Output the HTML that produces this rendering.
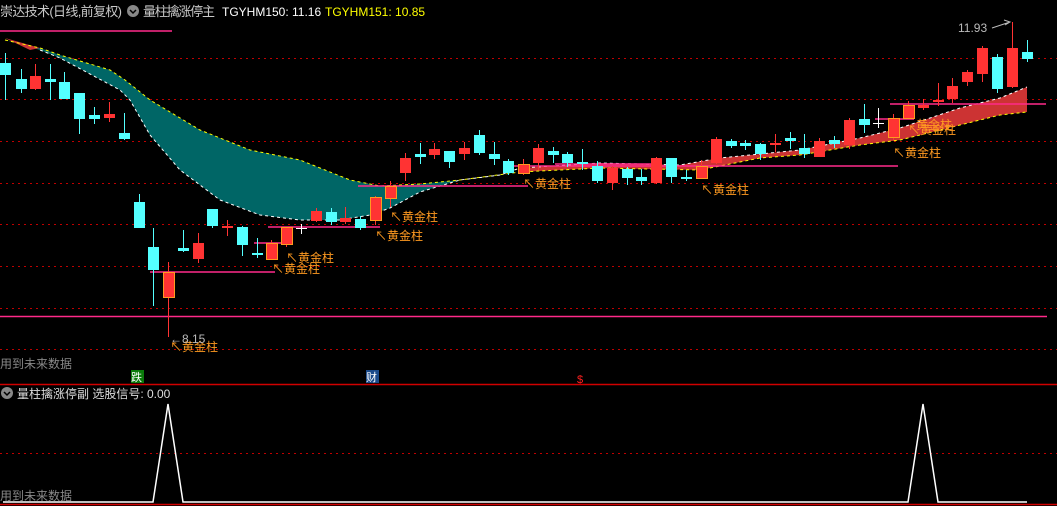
<!DOCTYPE html><html><head><meta charset="utf-8"><style>
body{margin:0;background:#000;width:1057px;height:506px;overflow:hidden}
svg{display:block}
text{font-family:"Liberation Sans","Noto Sans CJK SC",sans-serif}
</style></head><body>
<svg width="1057" height="506" viewBox="0 0 1057 506" xmlns="http://www.w3.org/2000/svg">
<g stroke="#c00000" stroke-dasharray="2,4" stroke-width="1">
<line x1="0" y1="58.5" x2="1057" y2="58.5"/><line x1="0" y1="99.5" x2="1057" y2="99.5"/><line x1="0" y1="141.5" x2="1057" y2="141.5"/><line x1="0" y1="183.5" x2="1057" y2="183.5"/><line x1="0" y1="224.5" x2="1057" y2="224.5"/><line x1="0" y1="266.5" x2="1057" y2="266.5"/><line x1="0" y1="308.5" x2="1057" y2="308.5"/><line x1="0" y1="349.5" x2="1057" y2="349.5"/><line x1="0" y1="453.5" x2="1057" y2="453.5"/>
</g>
<path d="M5,40 L40,48 L60,55 L110,70 L125,80 L150,100 L200,130 L250,150 L300,160 L350,180 L380,186 L420,184 L460,180 L520,172 L500,175 L460,180 L420,192 L390,208 L370,215 L340,220 L300,220 L260,215 L220,200 L180,170 L150,135 L130,100 L120,90 L60,58 L40,50 Z" fill="#006666"/>
<path d="M5,38 L40,48 L30,50 Z" fill="#cc3333"/>
<path d="M520,168 L600,163 L680,165 L720,158 L800,150 L860,138 L900,128 L960,108 L1000,98 L1027,87 L1027,112 L1000,115 L960,125 L900,140 L860,145 L800,155 L760,158 L700,170 L600,168 L520,172 Z" fill="#cc3333"/>
<path d="M5,40 L40,48 L60,55 L110,70 L125,80 L150,100 L200,130 L250,150 L300,160 L350,180 L380,186 L420,184 L460,180 L520,172 L600,168 L700,170 L760,158 L800,155 L860,145 L900,140 L960,125 L1000,115 L1027,112" fill="none" stroke="#ffff00" stroke-dasharray="3,3"/>
<path d="M40,50 L60,58 L120,90 L130,100 L150,135 L180,170 L220,200 L260,215 L300,220 L340,220 L370,215 L390,208 L420,192 L460,180 L500,175 L520,168 L600,163 L680,165 L720,158 L800,150 L860,138 L900,128 L960,108 L1000,98 L1027,87" fill="none" stroke="#fff" stroke-dasharray="3,3"/>
<g stroke="#ff2a8a" stroke-width="1.5">
<line x1="0" y1="31" x2="172" y2="31"/><line x1="0" y1="316.5" x2="1047" y2="316.5"/><line x1="890" y1="104" x2="1046" y2="104"/><line x1="510" y1="166" x2="898" y2="166"/><line x1="150" y1="272" x2="275" y2="272"/><line x1="268" y1="227" x2="380" y2="227"/><line x1="358" y1="186" x2="528" y2="186"/><line x1="254" y1="243" x2="290" y2="243"/><line x1="555" y1="164" x2="660" y2="164"/><line x1="875" y1="119" x2="914" y2="119"/>
</g>
<!-- cyan -->
<path stroke="#54ffff" d="M5.5,53V100M21.5,69V93M50.5,64V100M64.5,72V99M79.5,93V134M94.5,107V124M124.5,113V140M139.5,194V228M153.5,228V306M183.5,230V252M212.5,209V228M242.5,226V256M257.5,238V258M331.5,208V225M360.5,216V230M420.5,143V164M449.5,151V168M479.5,130V155M494.5,142V165M508.5,159V175M553.5,147V163M567.5,152V167M582.5,149V170M597.5,161V183M627.5,167V185M641.5,169V185M671.5,158V183M686.5,170V181M731.5,139V148M745.5,140V150M760.5,143V160M790.5,132V149M804.5,134V158M834.5,136V148M864.5,104V133M997.5,54V93M1027.5,40V62"/>
<g fill="#54ffff">
<rect x="0" y="63" width="11" height="12"/><rect x="16" y="79" width="11" height="10"/><rect x="45" y="79" width="11" height="3"/><rect x="59" y="82" width="11" height="17"/><rect x="74" y="93" width="11" height="26"/><rect x="89" y="115" width="11" height="4"/><rect x="119" y="133" width="11" height="6"/><rect x="134" y="202" width="11" height="26"/><rect x="148" y="247" width="11" height="23"/><rect x="178" y="248" width="11" height="3"/><rect x="207" y="209" width="11" height="17"/><rect x="237" y="227" width="11" height="18"/><rect x="252" y="253" width="11" height="2"/><rect x="326" y="212" width="11" height="10"/><rect x="355" y="219" width="11" height="9"/><rect x="415" y="154" width="11" height="3"/><rect x="444" y="151" width="11" height="11"/><rect x="474" y="135" width="11" height="18"/><rect x="489" y="154" width="11" height="5"/><rect x="503" y="161" width="11" height="12"/><rect x="548" y="151" width="11" height="4"/><rect x="562" y="154" width="11" height="9"/><rect x="577" y="162" width="11" height="2"/><rect x="592" y="166" width="11" height="15"/><rect x="622" y="169" width="11" height="9"/><rect x="636" y="177" width="11" height="4"/><rect x="666" y="158" width="11" height="19"/><rect x="681" y="177" width="11" height="2"/><rect x="726" y="141" width="11" height="5"/><rect x="740" y="143" width="11" height="3"/><rect x="755" y="144" width="11" height="10"/><rect x="785" y="138" width="11" height="3"/><rect x="799" y="148" width="11" height="6"/><rect x="829" y="140" width="11" height="4"/><rect x="859" y="119" width="11" height="6"/><rect x="992" y="57" width="11" height="32"/><rect x="1022" y="52" width="11" height="7"/>
</g>
<!-- red -->
<path stroke="#ff3333" d="M35.5,64V90M109.5,102V122M198.5,233V263M227.5,220V236M316.5,208V222M345.5,207V224M405.5,153V181M434.5,143V159M464.5,142V160M538.5,144V170M612.5,166V190M656.5,157V184M716.5,137V164M775.5,134V152M819.5,138V157M849.5,118V149M923.5,99V110M938.5,83V106M952.5,78V103M967.5,70V86M982.5,46V82M1012.5,22V88M168.5,262V337M271.5,240V259M286.5,227V247M375.5,196V225M390.5,181V207M523.5,159V175M701.5,160V178M893.5,114V140M908.5,101V118"/>
<g fill="#ff3333">
<rect x="30" y="76" width="11" height="13"/><rect x="104" y="114" width="11" height="4"/><rect x="193" y="243" width="11" height="16"/><rect x="222" y="226" width="11" height="2"/><rect x="311" y="211" width="11" height="10"/><rect x="340" y="218" width="11" height="4"/><rect x="400" y="158" width="11" height="15"/><rect x="429" y="149" width="11" height="6"/><rect x="459" y="148" width="11" height="6"/><rect x="533" y="148" width="11" height="15"/><rect x="607" y="168" width="11" height="15"/><rect x="651" y="158" width="11" height="25"/><rect x="711" y="139" width="11" height="24"/><rect x="770" y="143" width="11" height="2"/><rect x="814" y="141" width="11" height="16"/><rect x="844" y="120" width="11" height="25"/><rect x="918" y="105" width="11" height="3"/><rect x="933" y="100" width="11" height="2"/><rect x="947" y="86" width="11" height="13"/><rect x="962" y="72" width="11" height="10"/><rect x="977" y="48" width="11" height="26"/><rect x="1007" y="48" width="11" height="39"/>
</g>
<g fill="#ff3333" stroke="#ff9a20">
<rect x="163.5" y="272.5" width="11" height="25"/><rect x="266.5" y="243.5" width="11" height="16"/><rect x="281.5" y="227.5" width="11" height="17"/><rect x="370.5" y="197.5" width="11" height="23"/><rect x="385.5" y="186.5" width="11" height="12"/><rect x="518.5" y="164.5" width="11" height="9"/><rect x="696.5" y="166.5" width="11" height="12"/><rect x="888.5" y="118.5" width="11" height="19"/><rect x="903.5" y="105.5" width="11" height="13"/>
</g>
<path stroke="#fff" d="M301.5,224V234M296,228.5H307M878.5,108V128M873,123.5H884"/>
<g fill="#ff9a20" font-size="12">
<text x="170" y="351">↖黄金柱</text><text x="272" y="273">↖黄金柱</text><text x="286" y="262">↖黄金柱</text><text x="375" y="240">↖黄金柱</text><text x="390" y="221">↖黄金柱</text><text x="523" y="188">↖黄金柱</text><text x="701" y="194">↖黄金柱</text><text x="893" y="157">↖黄金柱</text><text x="908" y="134">↖黄金柱</text><text x="916" y="129">黄金柱</text>
</g>
<text x="170" y="343" fill="#bbb" font-size="12">←8.15</text>
<text x="958" y="32" fill="#bbb" font-size="12">11.93</text>
<path d="M992,28 L1010,22 M1004,20 L1010,22 L1005,25" stroke="#bbb" fill="none"/>
<text x="0" y="16" fill="#c8c8c8" font-size="13" textLength="122">崇达技术(日线,前复权)</text>
<circle cx="133" cy="11" r="6" fill="#888"/><path d="M130,10 L133,13 L136,10" stroke="#000" fill="none" stroke-width="1.5"/>
<text x="143" y="16" fill="#c8c8c8" font-size="13" textLength="72">量柱擒涨停主</text>
<text x="222" y="16" fill="#fff" font-size="12">TGYHM150: 11.16</text>
<text x="325" y="16" fill="#ffff00" font-size="12">TGYHM151: 10.85</text>
<text x="0" y="368" fill="#888" font-size="12">用到未来数据</text>
<rect x="131" y="370" width="13" height="13" fill="#0a7a0a"/><text x="131" y="381" fill="#fff" font-size="11">跌</text>
<rect x="366" y="370" width="13" height="13" fill="#1a4a8a"/><text x="366" y="381" fill="#fff" font-size="11">财</text>
<text x="577" y="383" fill="#ff2020" font-size="11">$</text>
<line x1="0" y1="384.5" x2="1057" y2="384.5" stroke="#d00000" stroke-width="1.5"/>
<line x1="0" y1="504.5" x2="1057" y2="504.5" stroke="#d00000" stroke-width="1.5"/>
<circle cx="7" cy="393" r="6" fill="#888"/><path d="M4,392 L7,395 L10,392" stroke="#000" fill="none" stroke-width="1.5"/>
<text x="17" y="398" fill="#ddd" font-size="12">量柱擒涨停副 选股信号: 0.00</text>
<path d="M3,502 L153,502 L168,404 L183,502 L908,502 L923,404 L938,502 L1027,502" fill="none" stroke="#fff" stroke-width="1.5"/>
<text x="0" y="500" fill="#888" font-size="12">用到未来数据</text>
</svg>
</body></html>
